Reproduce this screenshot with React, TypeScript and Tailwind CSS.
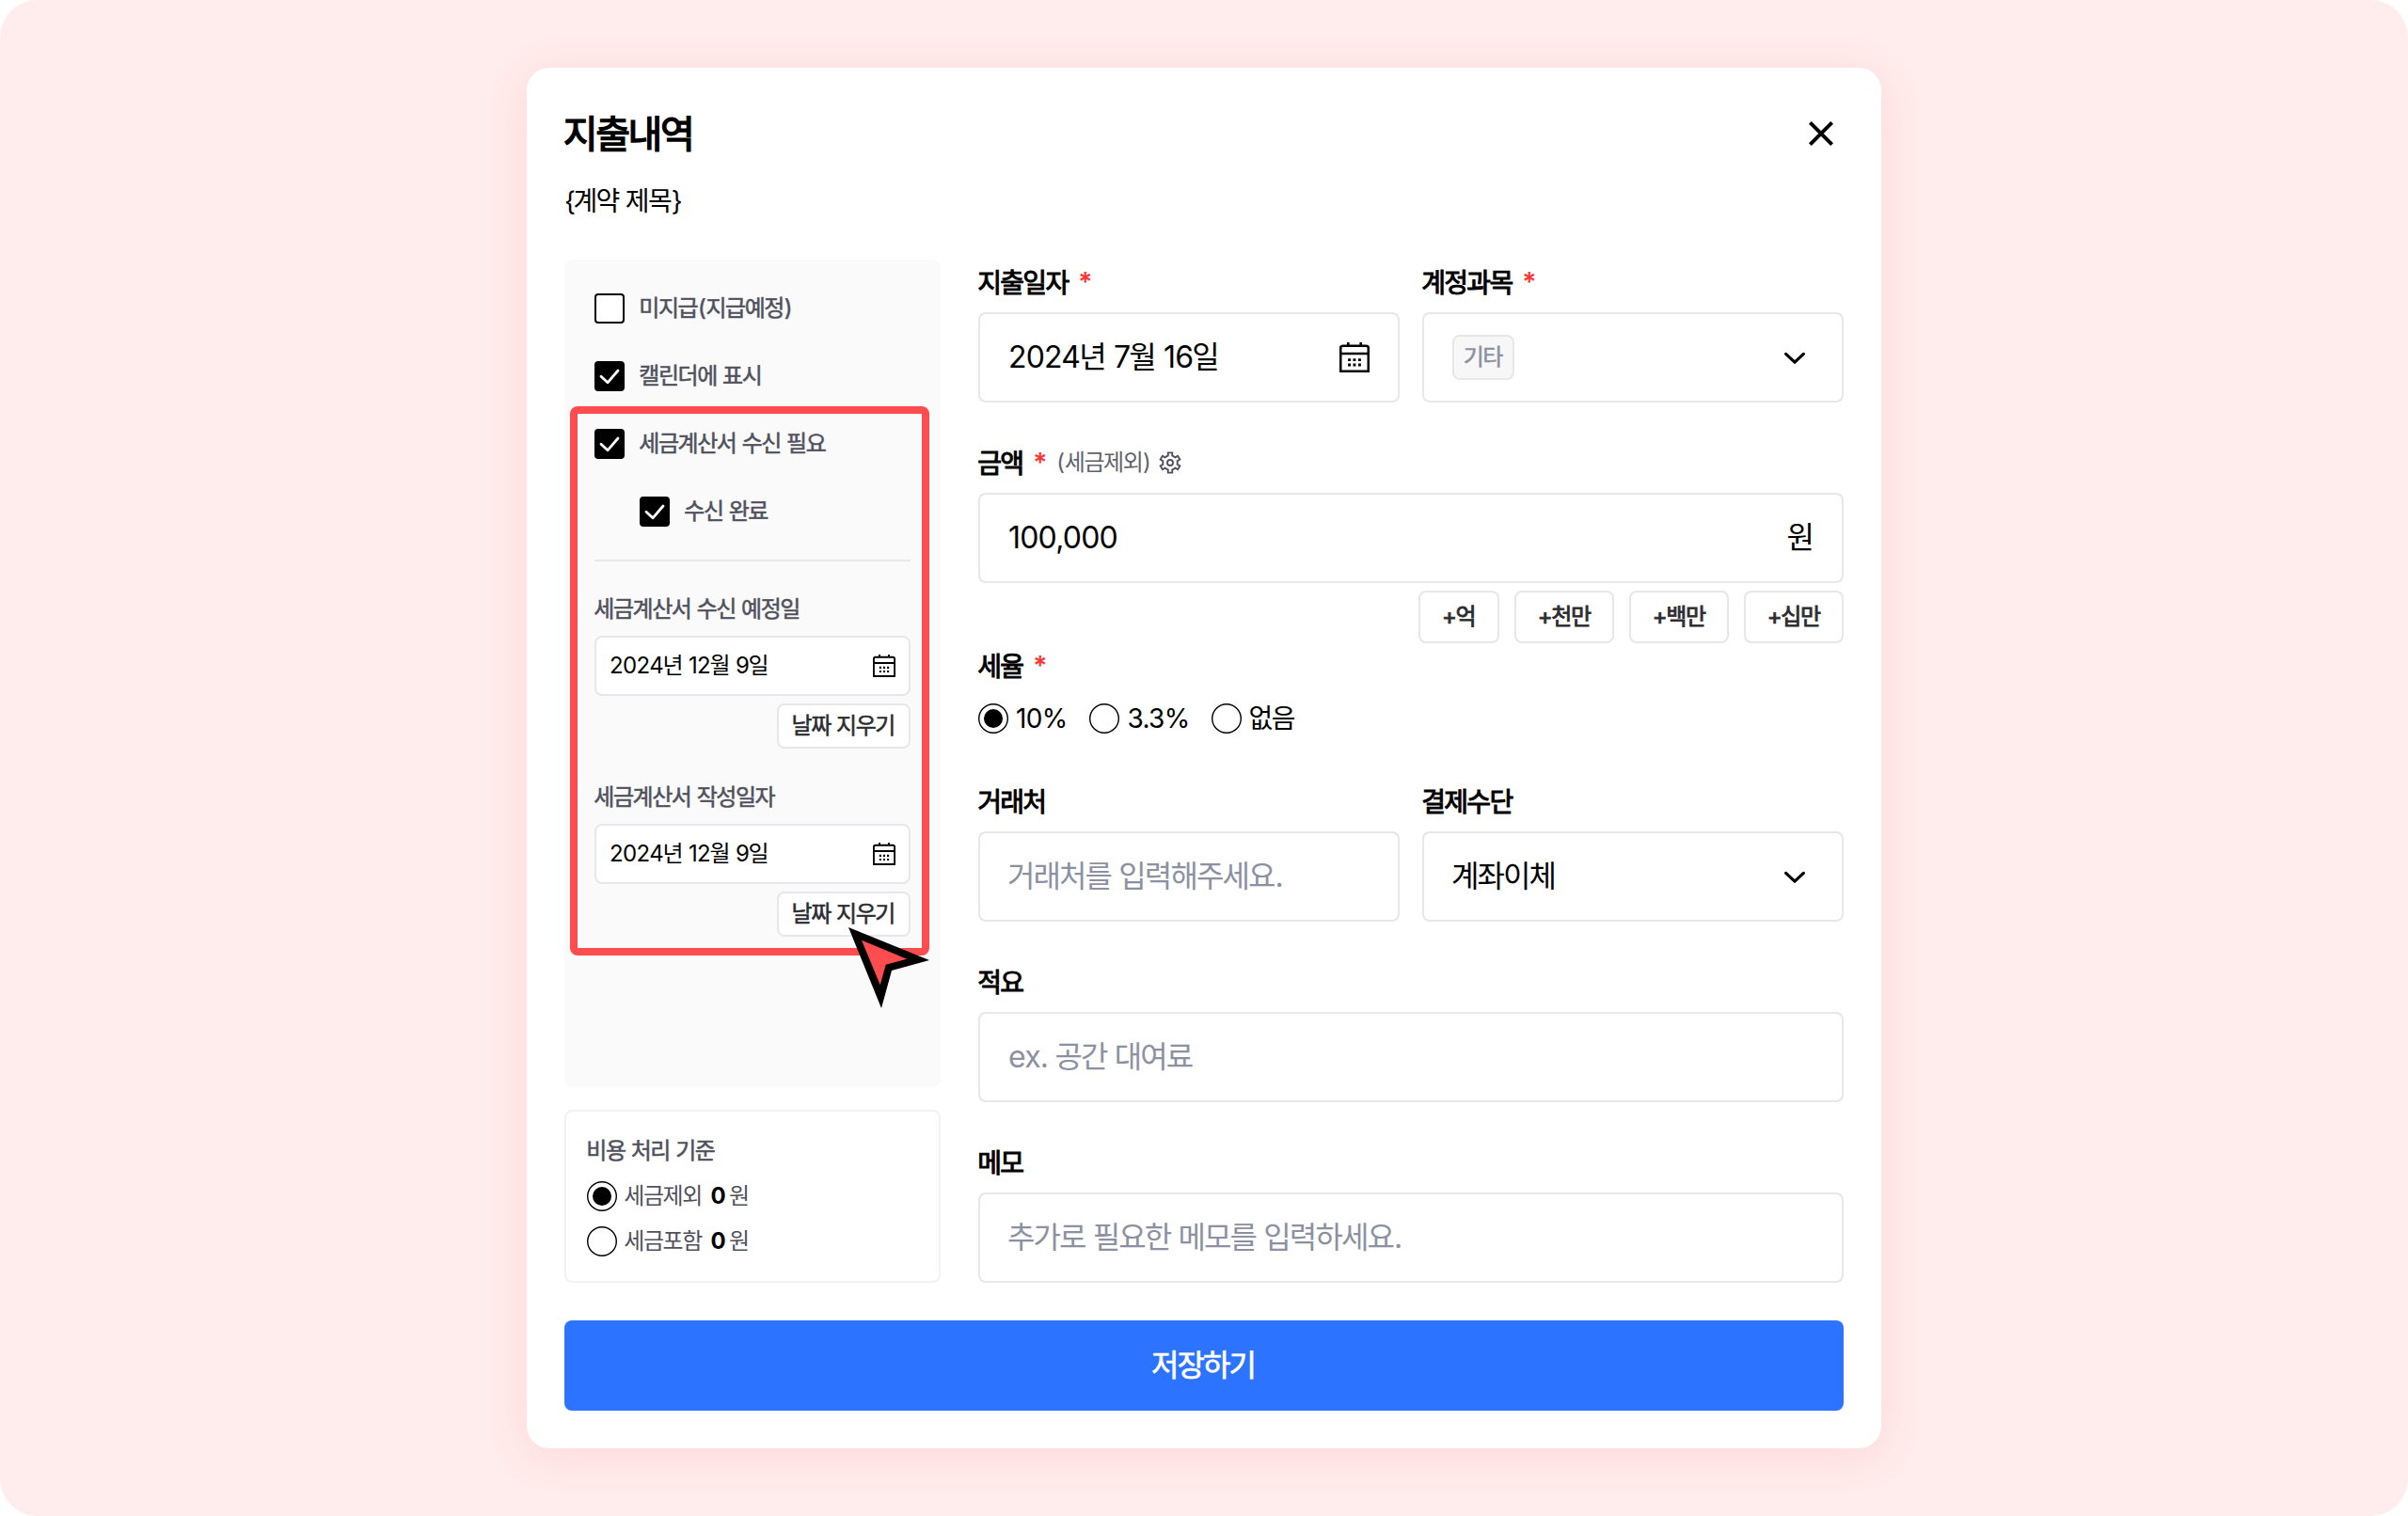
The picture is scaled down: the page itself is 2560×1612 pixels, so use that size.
import { useState } from "react";
import type { ReactNode } from "react";

function runClass(run: string) {
  if (/[가-힣]/.test(run)) return "-ml-[0.03em] mr-[0.03em] tracking-[-0.06em]";
  if (/[{}]/.test(run)) return "tracking-[-0.06em]";
  if (/[()]/.test(run)) return "tracking-[0.02em]";
  return "tracking-[-0.025em]";
}

// Hangul glyphs are set slightly tighter than the font's own advance
function Txt({ children }: { children: string }) {
  const runs = children.match(/[가-힣]+|[^가-힣]+/g) ?? [];
  return (
    <span className="whitespace-pre">
      {runs.map((run, i) => (
        <span key={i} className={runClass(run)}>
          {run}
        </span>
      ))}
    </span>
  );
}

function CalendarIcon({ className }: { className: string }) {
  return (
    <svg viewBox="0 0 32 32" className={className} fill="none" stroke="currentColor">
      <path d="M1.200 30.700V6.200a2.500 2.500 0 0 1 2.500-2.500h24.600a2.500 2.500 0 0 1 2.500 2.500v24.500z" strokeWidth="2.6" />
      <path d="M1 12h30M9.300 0v4M22.700 0v4" strokeWidth="2.6" />
      <path d="M9.100 18.600h2.900m2.500 0h2.900m2.600 0h2.900M9.100 24h2.900m2.500 0h2.900m2.600 0h2.900" strokeWidth="2.9" />
    </svg>
  );
}

function ChevronIcon() {
  return (
    <svg viewBox="0 0 32 32" className="mr-1 size-8" fill="none" stroke="currentColor" strokeWidth="3.200" strokeLinecap="round">
      <path d="M6.600 12.400 16 21.200l9.400-8.800" strokeLinejoin="round" />
    </svg>
  );
}

// six teeth, each one a pair of outer points between two root points
const gearPoints = Array.from({ length: 6 }, (_, tooth) =>
  [
    [-16, 7.9],
    [-12, 10.9],
    [12, 10.9],
    [16, 7.9],
  ].map(([offset, radius]) => {
    const angle = ((tooth * 60 - 90 + offset) * Math.PI) / 180;
    return `${(12 + radius * Math.cos(angle)).toFixed(2)},${(12 + radius * Math.sin(angle)).toFixed(2)}`;
  }),
)
  .flat()
  .join(" ");

function GearIcon() {
  return (
    <svg viewBox="0 0 24 24" className="size-6" fill="none" stroke="#4f515c" strokeWidth="1.900">
      <polygon points={gearPoints} />
      <circle cx="12" cy="12" r="3" />
    </svg>
  );
}

function Checkbox({ label, defaultChecked = false }: { label: string; defaultChecked?: boolean }) {
  const [checked, setChecked] = useState(defaultChecked);

  return (
    <button type="button" onClick={() => setChecked(!checked)} className="flex h-8 items-center gap-4 text-2xl text-[#4f515c] [-webkit-text-stroke:0.022em]">
      <span className={`flex size-8 items-center justify-center rounded-[4px] border-2 border-black ${checked ? "bg-black" : "bg-white"}`}>
        {checked && (
          <svg viewBox="0 0 32 32" className="size-8 shrink-0" fill="none" stroke="white" strokeWidth="2.800" strokeLinecap="round" strokeLinejoin="round">
            <path d="M7 16.200l7 6.600L25 10" />
          </svg>
        )}
      </span>
      <Txt>{label}</Txt>
    </button>
  );
}

function Radio({ checked, onSelect, children }: { checked: boolean; onSelect: () => void; children: ReactNode }) {
  return (
    <button type="button" onClick={onSelect} className="flex h-8 items-center gap-2">
      <svg viewBox="0 0 32 32" className="size-8" fill="white" stroke="black" strokeWidth="1.400">
        <circle cx="16" cy="16" r="15.300" />
        {checked && <circle cx="16" cy="16" r="10" fill="black" stroke="none" />}
      </svg>
      {children}
    </button>
  );
}

function Field({ label, required, extra, children }: { label: string; required?: boolean; extra?: ReactNode; children: ReactNode }) {
  return (
    <div className="flex flex-1 flex-col gap-2">
      <div className="flex h-12 items-center">
        <span className="pt-0.5 text-[28px] [-webkit-text-stroke:0.036em]">
          <Txt>{label}</Txt>
        </span>
        {required && <span className="ml-2.5 text-[28px] font-semibold text-[#ff3636]">*</span>}
        {extra}
      </div>
      {children}
    </div>
  );
}

function InputBox({ placeholder, children }: { placeholder?: string; children?: ReactNode }) {
  return (
    <div className="flex h-24 items-center justify-between rounded-lg border-2 border-[#e6e6eb] px-[30px] text-[32px]">
      {placeholder && (
        <span className="text-[#8c91a1]">
          <Txt>{placeholder}</Txt>
        </span>
      )}
      {children}
    </div>
  );
}

function TaxDate({ label }: { label: string }) {
  const [date, setDate] = useState("2024년 12월 9일");

  return (
    <div className="flex flex-col">
      <div className="flex h-12 items-center text-2xl text-[#4f515c] [-webkit-text-stroke:0.022em]">
        <Txt>{label}</Txt>
      </div>
      <div className="mt-1 flex h-16 items-center justify-between rounded-lg border-2 border-[#e6e6eb] bg-white px-3.5 text-2xl">
        <Txt>{date}</Txt>
        <CalendarIcon className="size-6" />
      </div>
      <button
        type="button"
        onClick={() => setDate("")}
        className="mt-2 flex h-12 w-[142px] items-center justify-center self-end rounded-lg border-2 border-[#e6e6eb] bg-white text-2xl text-[#2c2c30] [-webkit-text-stroke:0.022em]"
      >
        <Txt>날짜 지우기</Txt>
      </button>
    </div>
  );
}

const quickAmounts = [
  { label: "+억", width: "w-[86px]" },
  { label: "+천만", width: "w-[106px]" },
  { label: "+백만", width: "w-[106px]" },
  { label: "+십만", width: "w-[106px]" },
];

export default function App() {
  const [basis, setBasis] = useState("세금제외");
  const [taxRate, setTaxRate] = useState("10%");

  return (
    <div className="flex h-[1612px] w-[2560px] justify-center rounded-[40px] bg-[#ffecec] pt-[72px] font-['Inter','Noto_Sans_CJK_KR',sans-serif] text-black">
      <div className="relative flex h-[1468px] w-[1440px] flex-col rounded-3xl bg-white px-10 pt-10 shadow-[0_8px_48px_rgba(255,77,79,0.12)]">
        <header className="flex h-[60px] items-center justify-between">
          <h1 className="pt-0.5 text-[40px] [-webkit-text-stroke:0.036em]">
            <Txt>지출내역</Txt>
          </h1>
          <button type="button" className="mr-2 flex size-8 items-center justify-center">
            <svg viewBox="0 0 32 32" className="size-8" fill="none" stroke="black" strokeWidth="4">
              <path d="M4.400 4.400 27.600 27.600M27.600 4.400 4.400 27.600" />
            </svg>
          </button>
        </header>
        <p className="mt-5 flex h-10 items-center pt-[3px] text-[28px]">
          <Txt>{"{계약 제목}"}</Txt>
        </p>

        <div className="mt-11 flex gap-10">
          <aside className="flex w-[400px] flex-col gap-6">
            <div className="h-[880px] rounded-lg bg-[#fafafa] px-8 pt-9">
              <div className="flex flex-col gap-10">
                <Checkbox label="미지급(지급예정)" />
                <Checkbox label="캘린더에 표시" defaultChecked />
                <Checkbox label="세금계산서 수신 필요" defaultChecked />
                <div className="pl-12">
                  <Checkbox label="수신 완료" defaultChecked />
                </div>
              </div>
              <hr className="mt-[35px] border-t-2 border-[#e6e6eb]" />
              <div className="mt-[27px] flex flex-col gap-7">
                <TaxDate label="세금계산서 수신 예정일" />
                <TaxDate label="세금계산서 작성일자" />
              </div>
            </div>
            <div className="flex h-[184px] flex-col rounded-lg border-2 border-[#f2f2f4] px-[22px] pt-[22px] text-2xl text-[#4f515c]">
              <div className="flex h-10 items-center [-webkit-text-stroke:0.022em]">
                <Txt>비용 처리 기준</Txt>
              </div>
              <div className="mt-3 flex flex-col gap-4">
                {["세금제외", "세금포함"].map((name) => (
                  <Radio key={name} checked={basis === name} onSelect={() => setBasis(name)}>
                    <span className="flex items-center">
                      <Txt>{name}</Txt>
                      <span className="mr-1 ml-[9px] font-bold text-black">0</span>
                      <Txt>원</Txt>
                    </span>
                  </Radio>
                ))}
              </div>
            </div>
          </aside>

          <section className="flex w-[920px] flex-col gap-10">
            <div className="flex gap-6">
              <Field label="지출일자" required>
                <InputBox>
                  <Txt>2024년 7월 16일</Txt>
                  <CalendarIcon className="size-8" />
                </InputBox>
              </Field>
              <Field label="계정과목" required>
                <InputBox>
                  <span className="flex h-12 w-[66px] items-center justify-center rounded-lg border-2 border-[#e6e6eb] bg-[#f7f7f8] text-2xl text-[#8c91a1] [-webkit-text-stroke:0.022em]">
                    <Txt>기타</Txt>
                  </span>
                  <ChevronIcon />
                </InputBox>
              </Field>
            </div>

            <div>
              <Field
                label="금액"
                required
                extra={
                  <span className="ml-2.5 flex items-center gap-2 text-2xl text-[#5f616d]">
                    <Txt>(세금제외)</Txt>
                    <GearIcon />
                  </span>
                }
              >
                <InputBox>
                  <Txt>100,000</Txt>
                  <Txt>원</Txt>
                </InputBox>
              </Field>
              <div className="mt-2 flex justify-end gap-4">
                {quickAmounts.map(({ label, width }) => (
                  <button
                    key={label}
                    type="button"
                    className={`flex h-14 items-center justify-center rounded-lg border-2 border-[#e6e6eb] text-2xl text-[#2c2c30] [-webkit-text-stroke:0.036em] ${width}`}
                  >
                    <Txt>{label}</Txt>
                  </button>
                ))}
              </div>
              <Field label="세율" required>
                <div className="flex h-12 items-center gap-6 text-[28px]">
                  {["10%", "3.3%", "없음"].map((rate) => (
                    <Radio key={rate} checked={taxRate === rate} onSelect={() => setTaxRate(rate)}>
                      <Txt>{rate}</Txt>
                    </Radio>
                  ))}
                </div>
              </Field>
            </div>

            <div className="flex gap-6">
              <Field label="거래처">
                <InputBox placeholder="거래처를 입력해주세요." />
              </Field>
              <Field label="결제수단">
                <InputBox>
                  <Txt>계좌이체</Txt>
                  <ChevronIcon />
                </InputBox>
              </Field>
            </div>
            <div className="flex">
              <Field label="적요">
                <InputBox placeholder="ex. 공간 대여료" />
              </Field>
            </div>
            <div className="flex">
              <Field label="메모">
                <InputBox placeholder="추가로 필요한 메모를 입력하세요." />
              </Field>
            </div>
          </section>
        </div>

        <button type="button" className="mt-10 flex h-24 items-center justify-center rounded-lg bg-[#2c73ff] text-[32px] text-white [-webkit-text-stroke:0.022em]">
          <Txt>저장하기</Txt>
        </button>

        {/* highlight over the tax invoice options */}
        <div className="pointer-events-none absolute top-[360px] left-[46px] h-[584px] w-[382px] rounded-lg border-8 border-[#ff4d4f]" />
        <svg viewBox="0 0 86 86" className="pointer-events-none absolute top-[914px] left-[342px] size-[86px]">
          <path d="M0 0 86 35 46 46 35 86z" fill="black" />
          <path d="M14 13.700 62 33.700 39.700 39.700 33.700 61.300z" fill="#ff4d4f" />
        </svg>
      </div>
    </div>
  );
}
